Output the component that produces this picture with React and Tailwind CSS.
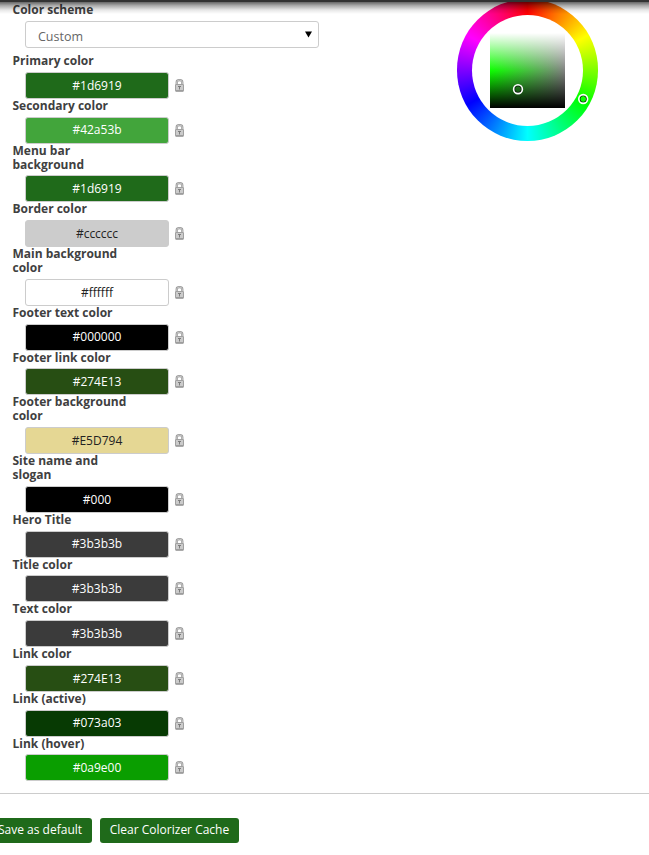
import React from "react";

const ROWS = [
  { label: "Primary color", value: "#1d6919", bg: "bg-[#1f6a1a]", fg: "text-white" },
  { label: "Secondary color", value: "#42a53b", bg: "bg-[#42a53b]", fg: "text-white" },
  { label: "Menu bar background", value: "#1d6919", bg: "bg-[#1f6a1a]", fg: "text-white" },
  { label: "Border color", value: "#cccccc", bg: "bg-[#cccccc]", fg: "text-[#222]" },
  { label: "Main background color", value: "#ffffff", bg: "bg-white", fg: "text-[#222]" },
  { label: "Footer text color", value: "#000000", bg: "bg-black", fg: "text-white" },
  { label: "Footer link color", value: "#274E13", bg: "bg-[#274e13]", fg: "text-white" },
  { label: "Footer background color", value: "#E5D794", bg: "bg-[#e5d794]", fg: "text-[#222]" },
  { label: "Site name and slogan", value: "#000", bg: "bg-black", fg: "text-white" },
  { label: "Hero Title", value: "#3b3b3b", bg: "bg-[#3b3b3b]", fg: "text-white" },
  { label: "Title color", value: "#3b3b3b", bg: "bg-[#3b3b3b]", fg: "text-white" },
  { label: "Text color", value: "#3b3b3b", bg: "bg-[#3b3b3b]", fg: "text-white" },
  { label: "Link color", value: "#274E13", bg: "bg-[#274e13]", fg: "text-white" },
  { label: "Link (active)", value: "#073a03", bg: "bg-[#073a03]", fg: "text-white" },
  { label: "Link (hover)", value: "#0a9e00", bg: "bg-[#0a9e00]", fg: "text-white" },
];

function Lock() {
  return (
    <svg width="9" height="13" viewBox="0 0 9 13" className="ml-1.5 block shrink-0">
      <path d="M1.7 7V3.2Q1.7 1.2 4.5 1.2Q7.3 1.2 7.3 3.2V7" fill="none" stroke="#969696" strokeWidth="2.2" />
      <path d="M1.7 7V3.2Q1.7 1.2 4.5 1.2Q7.3 1.2 7.3 3.2V7" fill="none" stroke="#d4d4d4" strokeWidth="0.8" />
      <rect x="0.5" y="5.5" width="8" height="6.5" rx="0.5" fill="#cbcbcb" stroke="#a0a0a0" />
      <path d="M0.5 12H8.5" stroke="#858585" />
      <path d="M3 7.5H6M4.5 7.5V10.5" stroke="#7c7c7c" />
    </svg>
  );
}

function ColorRow({ row }) {
  return (
    <div>
      <div className="w-[125px] text-[12px] font-bold leading-[14px] text-[#404040]">{row.label}</div>
      <div className="mt-[3.75px] ml-[12.5px] flex items-center">
        <div className={`flex h-[27px] w-36 items-center justify-center rounded-[3px] border border-[#ccc] pt-[0.6px] text-[12px] leading-[16px] ${row.bg} ${row.fg}`}>
          {row.value}
        </div>
        <Lock />
      </div>
    </div>
  );
}

function ColorWheel() {
  return (
    <div className="relative mt-[-1px] ml-[137.5px] h-[141.5px] w-[141.5px] rounded-full bg-[conic-gradient(#f00,#ff0,#0f0,#0ff,#00f,#f0f,#f00)]">
      <div className="absolute top-[15.5px] left-[15px] h-[111px] w-[111px] rounded-full bg-white" />
      <div className="absolute top-[34px] left-[33.5px] h-[75px] w-[75px] bg-[linear-gradient(to_bottom,#fff,rgba(255,255,255,0)_50%,rgba(0,0,0,0)_50%,#000),linear-gradient(to_right,rgba(128,128,128,0),#808080)] bg-[#0dff00]" />
      <svg className="absolute top-0 left-0" width="142" height="142" viewBox="0 0 142 142" fill="none">
        <circle cx="61" cy="90.2" r="3.4" stroke="#111" />
        <circle cx="61" cy="90.2" r="4.4" stroke="#fff" strokeWidth="1.6" />
        <circle cx="126.2" cy="100" r="3.4" stroke="#111" />
        <circle cx="126.2" cy="100" r="4.4" stroke="#fff" strokeWidth="1.6" />
      </svg>
    </div>
  );
}

export default function App() {
  return (
    <div className="relative h-[855px] w-[649px] overflow-hidden bg-white font-['Open_Sans',sans-serif]">
      <div className="flex h-[793px] items-start">
        <div className="w-[319px] shrink-0 pt-[3px] pl-[12.5px]">
          <div className="text-[12px] font-bold leading-[14px] text-[#404040]">Color scheme</div>
          <div className="mt-1 ml-[12.5px] flex h-[27px] items-center justify-between rounded-[3px] border border-[#ccc] pr-1.5 pl-3 text-[12.5px] text-[#666]">
            <span className="pt-[5px]">Custom</span>
            <svg width="7" height="7" viewBox="0 0 7 7" className="mb-[1px]"><path d="M0 0.5H7L3.5 6.5Z" fill="#000" /></svg>
          </div>
          <div className="mt-[6.15px]">
            {ROWS.map((row) => <ColorRow key={row.label} row={row} />)}
          </div>
        </div>
        <ColorWheel />
      </div>
      <div className="h-px bg-[#ccc]" />
      <div className="mt-6 ml-[-12px] flex gap-2 text-[12px] leading-[23px] text-white">
        <div className="h-[25px] w-[104px] rounded-[3px] bg-[#1f6a1a] pl-2.5 whitespace-nowrap">Save as default</div>
        <div className="h-[25px] w-[139px] rounded-[3px] bg-[#1f6a1a] text-center whitespace-nowrap">Clear Colorizer Cache</div>
      </div>
      <div className="absolute inset-x-0 top-0 h-[2px] bg-[#333]" />
      <div className="absolute inset-x-0 top-[2px] h-3 bg-[linear-gradient(to_bottom,rgba(0,0,0,0.6),rgba(0,0,0,0.33)_30%,rgba(0,0,0,0.1)_65%,transparent)]" />
    </div>
  );
}
